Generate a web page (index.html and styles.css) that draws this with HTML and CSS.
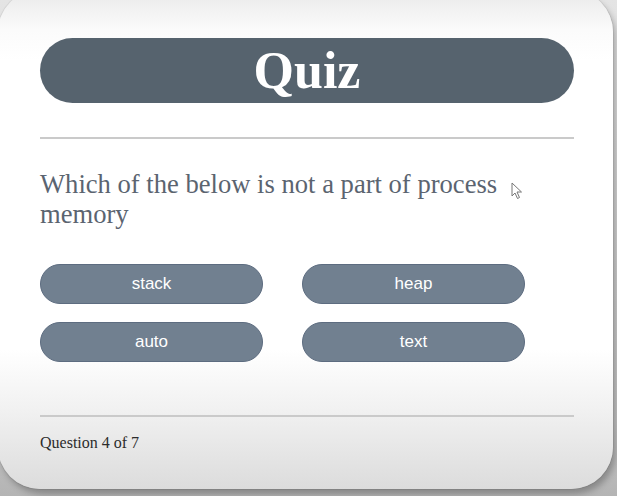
FILE: index.html
```html
<!DOCTYPE html>
<html>
<head>
<meta charset="utf-8">
<link rel="stylesheet" href="styles.css">
</head>
<body>
<div class="card">
  <div class="title">Quiz</div>
  <div class="rule rule-top"></div>
  <div class="question">Which of the below is not a part of process memory</div>
  <div class="answers">
    <button class="answer">stack</button>
    <button class="answer">heap</button>
    <button class="answer">auto</button>
    <button class="answer">text</button>
  </div>
  <div class="rule rule-bottom"></div>
  <div class="progress">Question 4 of 7</div>
  <svg class="cursor" width="12" height="18" viewBox="0 0 12 18"><path d="M1 1 L1 14 L4 11 L6.5 16.5 L8.5 15.5 L6 10 L10.5 10 Z" fill="#fff" stroke="#777" stroke-width="1" stroke-linejoin="round"/></svg>
</div>
</body>
</html>
```
FILE: styles.css
```css
html, body {
  margin: 0;
  padding: 0;
}
body {
  width: 617px;
  height: 496px;
  overflow: hidden;
  background: linear-gradient(#e4e4e4, #c4c4c4 85%, #b4b4b4);
}
.card {
  position: relative;
  box-sizing: border-box;
  margin: -10px 0 0 -2px;
  width: 615px;
  height: 499px;
  padding: 48px 39px 0 42px;
  border-radius: 42px;
  background: linear-gradient(#e9e9e9 0, #fbfbfb 40px, #ffffff 70px, #ffffff 360px, #f1f1f1 420px, #dcdcdc 100%);
  box-shadow: 3px 5px 6px rgba(0,0,0,0.25), 0 0 0 1px rgba(0,0,0,0.06);
  display: flex;
  flex-direction: column;
}
.title {
  height: 65px;
  border-radius: 33px;
  background: #56636e;
  color: #fff;
  font-family: "Liberation Serif", "Times New Roman", serif;
  font-weight: bold;
  font-size: 52px;
  line-height: 65px;
  text-align: center;
}
.rule {
  height: 2px;
  background: #cacaca;
}
.rule-top {
  margin-top: 34px;
}
.question {
  margin-top: 30px;
  font-family: "Liberation Serif", "Times New Roman", serif;
  font-size: 26.6px;
  line-height: 30px;
  color: #5b6470;
}
.answers {
  margin-top: 35px;
  display: grid;
  grid-template-columns: 223px 223px;
  column-gap: 39px;
  row-gap: 18px;
}
.answer {
  height: 40px;
  border: 1px solid #5d6c80;
  border-radius: 20px;
  background: #718090;
  color: #fff;
  font-family: "Liberation Sans", Arial, sans-serif;
  font-size: 17px;
  padding: 0;
}
.rule-bottom {
  margin-top: 53px;
}
.progress {
  margin-top: 17px;
  font-family: "Liberation Serif", "Times New Roman", serif;
  font-size: 16px;
  color: #2c2c2c;
}
.cursor {
  position: absolute;
  left: 513px;
  top: 192px;
}
```
